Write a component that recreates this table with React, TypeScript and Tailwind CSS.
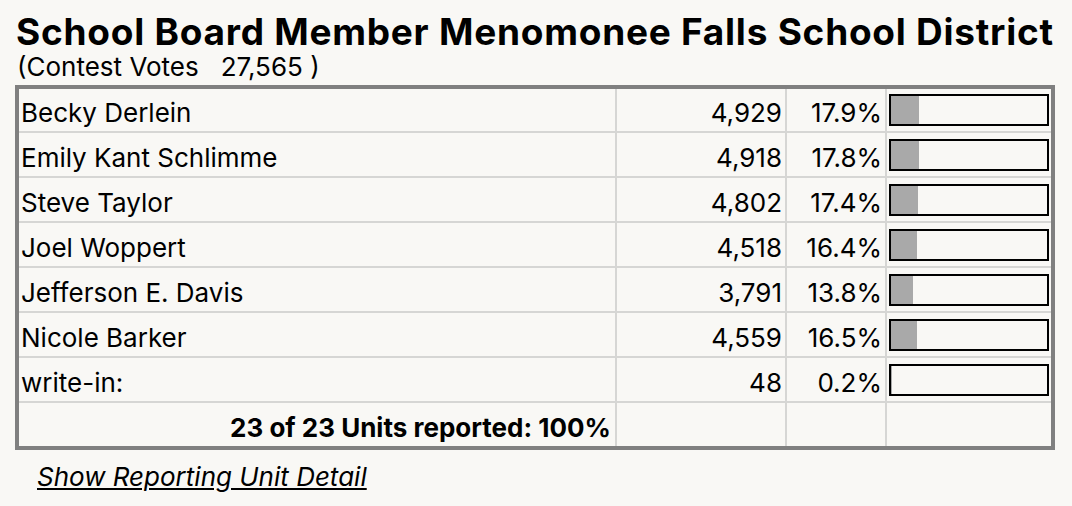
const rows = [
  { name: 'Becky Derlein', votes: '4,929', pct: 17.9 },
  { name: 'Emily Kant Schlimme', votes: '4,918', pct: 17.8 },
  { name: 'Steve Taylor', votes: '4,802', pct: 17.4 },
  { name: 'Joel Woppert', votes: '4,518', pct: 16.4 },
  { name: 'Jefferson E. Davis', votes: '3,791', pct: 13.8 },
  { name: 'Nicole Barker', votes: '4,559', pct: 16.5 },
  { name: 'write-in:', votes: '48', pct: 0.2 },
];

export default function App() {
  return (
    <div className="min-h-[506px] bg-[#f9f8f5] text-black font-['Inter',sans-serif] pt-[11px] pl-[15px]">
      <h1 className="text-[37px] font-bold leading-[42px] tracking-[0.75px] whitespace-nowrap pl-[1px]">
        School Board Member Menomonee Falls School District
      </h1>
      <div className="text-[26px] leading-[28px] pl-[2px]">(Contest Votes&nbsp;&nbsp; 27,565 )</div>
      <table className="mt-[4px] border-collapse border-4 border-[#808080] text-[26px] leading-[30px]">
        <tbody>
          {rows.map((r) => (
            <tr key={r.name} className="h-[45px]">
              <td className="w-[599px] border-2 border-[#d6d6d4] px-[2px] pt-[6px]">{r.name}</td>
              <td className="w-[170px] border-2 border-[#d6d6d4] px-[3px] pt-[6px] text-right">{r.votes}</td>
              <td className="w-[100px] border-2 border-[#d6d6d4] px-[3px] pt-[6px] text-right">{r.pct.toFixed(1)}%</td>
              <td className="w-[166px] border-2 border-[#d6d6d4] px-[2px]">
                <div className="h-[32px] w-[160px] border-2 border-black bg-[#f9f8f5]">
                  <div className="h-full bg-[#a9a9a9]" style={{ width: `${r.pct}%` }} />
                </div>
              </td>
            </tr>
          ))}
          <tr className="h-[46px]">
            <td className="border-2 border-[#d6d6d4] px-[4px] pt-[6px] text-right font-bold">
              23 of 23 Units reported: 100%
            </td>
            <td className="border-2 border-[#d6d6d4]" />
            <td className="border-2 border-[#d6d6d4]" />
            <td className="border-2 border-[#d6d6d4]" />
          </tr>
        </tbody>
      </table>
      <a href="#" className="mt-[12px] ml-[22px] inline-block text-[26px] leading-[30px] italic underline">
        Show Reporting Unit Detail
      </a>
    </div>
  );
}
